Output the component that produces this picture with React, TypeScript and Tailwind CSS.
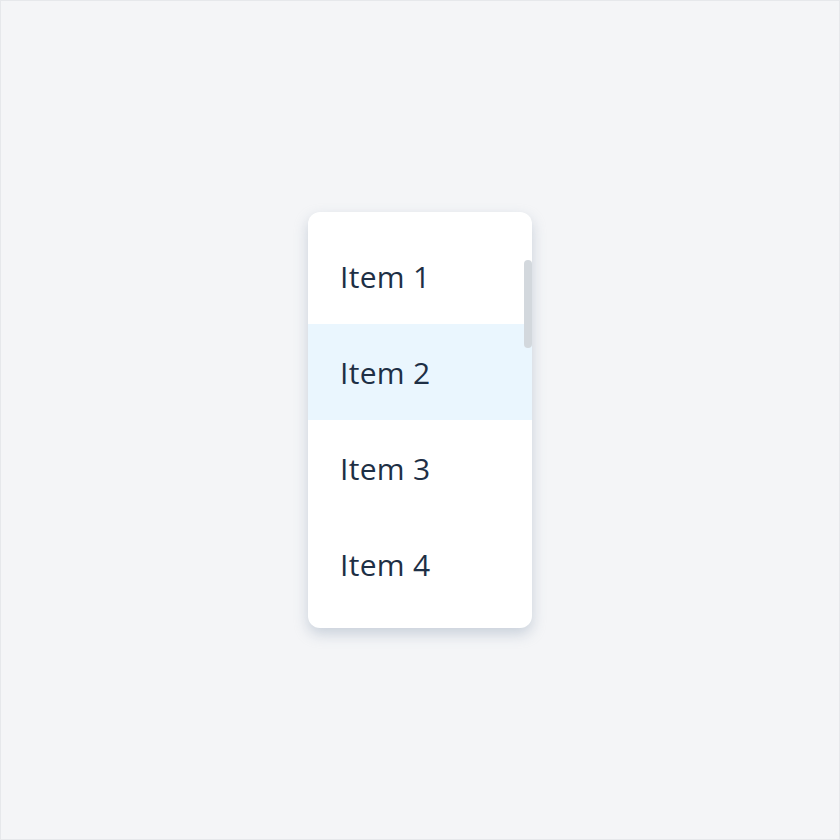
import React from "react";

export default function App() {
  const items = ["Item 1", "Item 2", "Item 3", "Item 4"];
  return (
    <div className="w-[840px] h-[840px] bg-[#f4f5f7] border border-[#e6e8eb] flex items-center justify-center" style={{ fontFamily: '"Open Sans", sans-serif' }}>
      <div className="relative w-[224px] h-[416px] bg-white rounded-xl shadow-[0_6px_14px_rgba(148,163,184,0.45)] overflow-hidden py-4">
        {items.map((it, i) => (
          <div
            key={it}
            className={`h-24 flex items-center pl-8 text-[30px] tracking-[0.3px] text-[#1e2f45] ${i === 1 ? "bg-[#eaf6fe]" : ""}`}
          >
            {it}
          </div>
        ))}
        <div className="absolute right-0 top-12 w-2 h-[88px] rounded-full bg-[#d3d8dd]" />
      </div>
    </div>
  );
}
